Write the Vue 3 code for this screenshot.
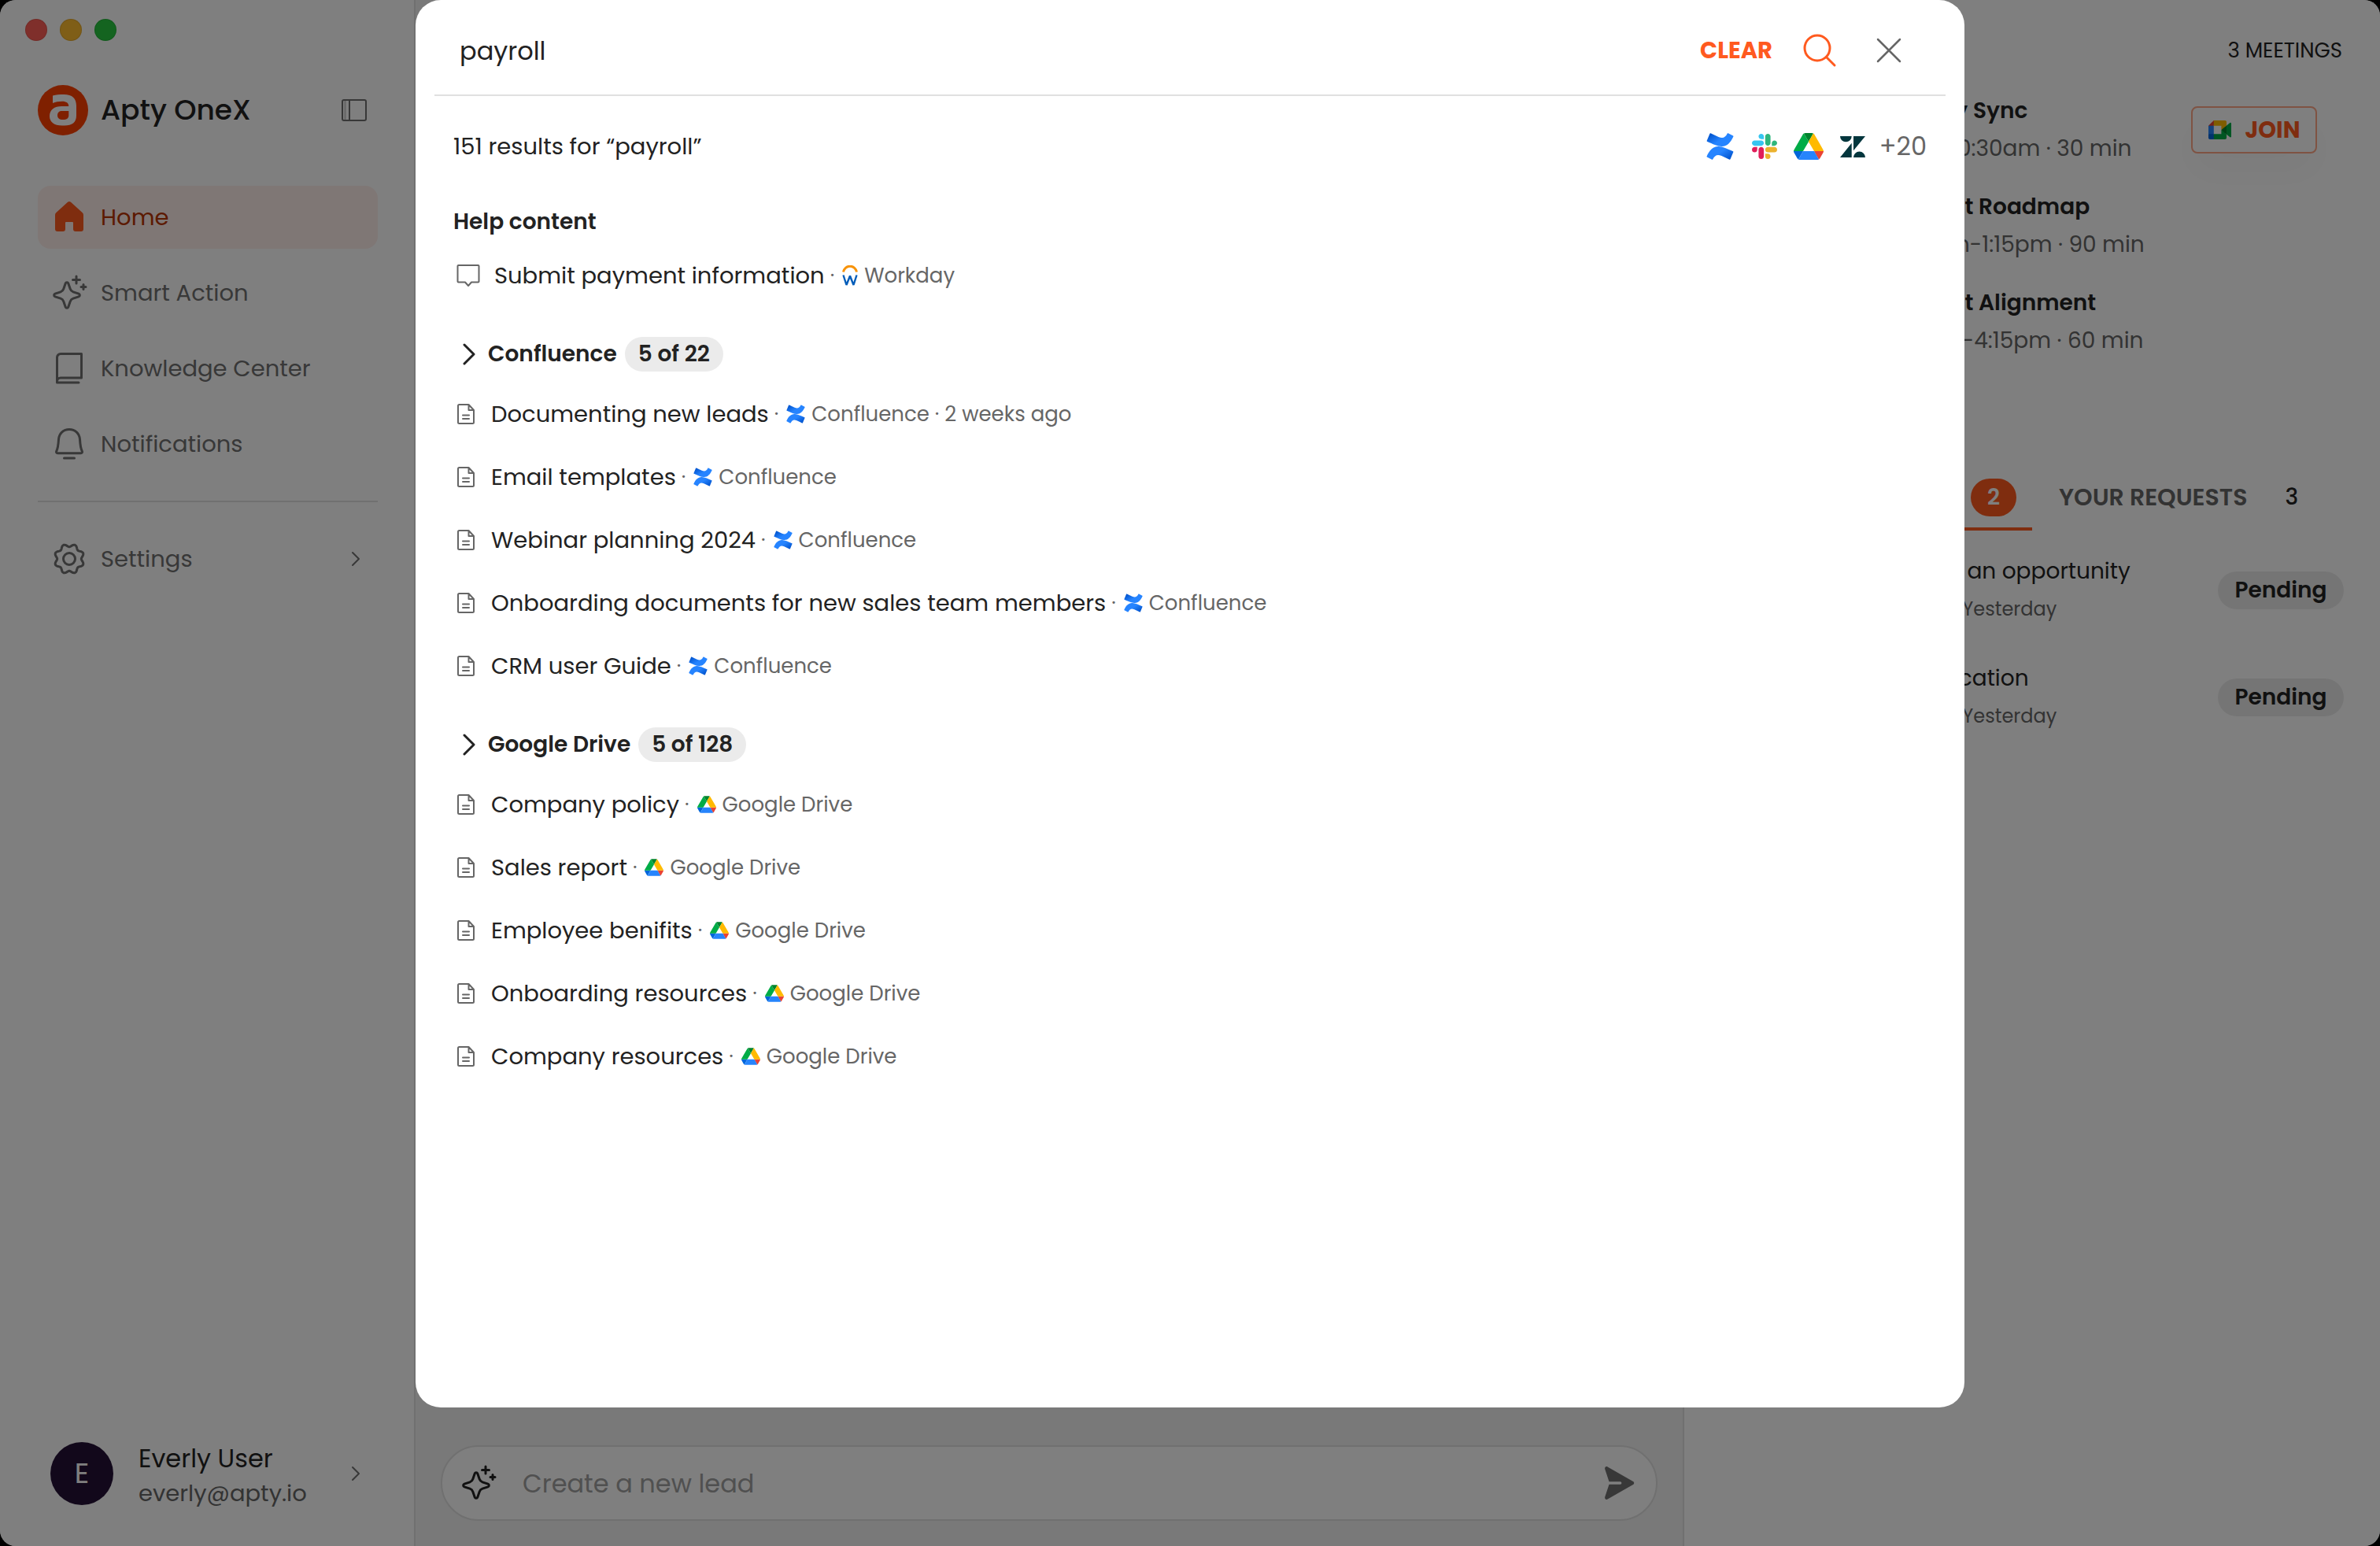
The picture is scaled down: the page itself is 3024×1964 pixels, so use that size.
<script setup>
import { ref } from 'vue'

const query = ref('payroll')
const draft = ref('')

const nav = [
  { label: 'Home', icon: 'home', active: true },
  { label: 'Smart Action', icon: 'sparkle' },
  { label: 'Knowledge Center', icon: 'book' },
  { label: 'Notifications', icon: 'bell' },
]

const groups = [
  {
    name: 'Confluence',
    icon: 'confluence',
    count: '5 of 22',
    items: [
      { title: 'Documenting new leads', when: '2 weeks ago' },
      { title: 'Email templates' },
      { title: 'Webinar planning 2024' },
      { title: 'Onboarding documents for new sales team members' },
      { title: 'CRM user Guide' },
    ],
  },
  {
    name: 'Google Drive',
    icon: 'drive',
    count: '5 of 128',
    items: [
      { title: 'Company policy' },
      { title: 'Sales report' },
      { title: 'Employee benifits' },
      { title: 'Onboarding resources' },
      { title: 'Company resources' },
    ],
  },
]

const meetings = [
  { title: 'Weekly Sync', time: '10:30am · 30 min', next: true },
  { title: 'Product Roadmap', time: '11:45am-1:15pm · 90 min' },
  { title: 'Product Alignment', time: '3:15pm-4:15pm · 60 min' },
]

const requests = [
  { title: 'Create an opportunity', meta: 'Oracle · Yesterday' },
  { title: 'Specification', meta: 'Oracle · Yesterday' },
]

// Eight-toothed gear outline, traced around the centre of a 48px box
const gearPath = Array.from({ length: 96 }, (_, i) => {
  const a = (i / 96) * Math.PI * 2
  const r = 17.2 - 1.9 * Math.cos(8 * a)
  return `${i ? 'L' : 'M'}${(24 + r * Math.cos(a)).toFixed(2)} ${(24 + r * Math.sin(a)).toFixed(2)}`
}).join('') + 'Z'
</script>

<template>
  <svg class="sprite" aria-hidden="true">
    <linearGradient id="cf-a" x1="1" y1="0.8" x2="0.3" y2="0.3">
      <stop offset="0" stop-color="#0052cc" />
      <stop offset="0.7" stop-color="#2684ff" />
    </linearGradient>
    <symbol id="home" viewBox="0 0 48 48">
      <path fill="currentColor" d="M22 4.800a3 3 0 0 1 4 0L40.800 18.300A4 4 0 0 1 42 21.200V39a3 3 0 0 1-3 3h-7a3 3 0 0 1-3-3v-8a1 1 0 0 0-1-1h-8a1 1 0 0 0-1 1v8a3 3 0 0 1-3 3H9a3 3 0 0 1-3-3V21.200a4 4 0 0 1 1.200-2.900z" />
    </symbol>
    <symbol id="sparkle" viewBox="0 0 48 48">
      <g fill="none" stroke="currentColor" stroke-width="3" stroke-linecap="round" stroke-linejoin="round">
        <path d="M19.200 12c.6-1.800 3-1.800 3.600 0l2.400 7c.7 2 1.800 3.100 3.800 3.800l7 2.400c1.800.6 1.800 3 0 3.600l-7 2.400c-2 .7-3.100 1.800-3.800 3.800l-2.400 7c-.6 1.800-3 1.800-3.600 0l-2.400-7c-.7-2-1.800-3.100-3.800-3.800l-7-2.400c-1.800-.6-1.800-3 0-3.600l7-2.400c2-.7 3.100-1.800 3.800-3.800z" />
        <path d="M33 3v9M28.500 7.500h9M42 13.500v6M39 16.500h6" />
      </g>
    </symbol>
    <symbol id="book" viewBox="0 0 48 48">
      <path fill="none" stroke="currentColor" stroke-width="3" stroke-linecap="round" stroke-linejoin="round" d="M8.500 42V10a4.500 4.500 0 0 1 4.500-4.500h26.500V36H13a4.500 4.500 0 0 0-4.500 4.500M8.500 42H36" />
    </symbol>
    <symbol id="bell" viewBox="0 0 48 48">
      <path fill="none" stroke="currentColor" stroke-width="3" stroke-linecap="round" stroke-linejoin="round" d="M24 5.500c-7.700 0-13 5.400-13.500 12.700-.4 7-.8 11-2.700 14.800-.8 1.700 0 2.700 1.500 2.700h29.400c1.500 0 2.300-1 1.500-2.700-1.900-3.800-2.300-7.800-2.700-14.800C37 10.900 31.700 5.500 24 5.500zM17.500 42h13" />
    </symbol>
    <symbol id="chevron" viewBox="0 0 12 20">
      <path fill="none" stroke="currentColor" stroke-width="2" stroke-linecap="round" stroke-linejoin="round" d="M2 2l8 8-8 8" />
    </symbol>
    <symbol id="doc" viewBox="0 0 24 28">
      <path fill="none" stroke="currentColor" stroke-width="2" stroke-linejoin="round" stroke-linecap="round" d="M3.500 2h12l6.500 7v15.500a1.500 1.500 0 0 1-1.500 1.500h-17A1.500 1.500 0 0 1 2 24.500v-21A1.500 1.500 0 0 1 3.500 2M15.500 2v7H22M8 15.500h8M8 20h8" />
    </symbol>
    <symbol id="confluence" viewBox="0 0 35 34">
      <path id="cf-half" fill="url(#cf-a)" d="M.6 29.400C4 22 8.500 16.800 15.500 17c5.500.2 11 3 18.500 6.300.4.200.5.600.3 1l-3.800 9c-.2.400-.6.600-1 .4L19.500 29c-5.500-2.400-8.700-.8-11.300 4.400-.2.400-.6.500-1 .3L.9 30.400c-.4-.2-.5-.6-.3-1z" />
      <use href="#cf-half" transform="rotate(180 17.500 17)" />
    </symbol>
    <symbol id="slack" viewBox="0 0 122.800 122.800">
      <path fill="#e01e5a" d="M25.800 77.600c0 7.100-5.800 12.900-12.900 12.900S0 84.700 0 77.600s5.800-12.900 12.900-12.900h12.900v12.900zm6.500 0c0-7.100 5.800-12.900 12.900-12.900s12.900 5.800 12.900 12.900v32.300c0 7.100-5.800 12.900-12.900 12.900s-12.900-5.800-12.900-12.900V77.600z" />
      <path fill="#36c5f0" d="M45.200 25.800c-7.100 0-12.900-5.800-12.900-12.900S38.100 0 45.200 0s12.900 5.800 12.900 12.900v12.900H45.200zm0 6.500c7.100 0 12.900 5.800 12.900 12.900s-5.800 12.900-12.900 12.900H12.900C5.800 58.100 0 52.300 0 45.200s5.800-12.900 12.900-12.900h32.300z" />
      <path fill="#2eb67d" d="M97 45.200c0-7.100 5.800-12.900 12.900-12.900s12.900 5.800 12.900 12.900-5.800 12.900-12.900 12.900H97V45.200zm-6.500 0c0 7.100-5.800 12.900-12.900 12.900s-12.900-5.800-12.900-12.900V12.900C64.700 5.800 70.500 0 77.600 0s12.900 5.800 12.900 12.900v32.300z" />
      <path fill="#ecb22e" d="M77.600 97c7.100 0 12.900 5.800 12.900 12.900s-5.800 12.900-12.900 12.900-12.900-5.800-12.900-12.900V97h12.900zm0-6.500c-7.100 0-12.900-5.800-12.900-12.900s5.800-12.900 12.900-12.900h32.300c7.100 0 12.900 5.800 12.900 12.900s-5.800 12.900-12.900 12.900H77.600z" />
    </symbol>
    <symbol id="drive" viewBox="0 0 87.300 78">
      <path fill="#0066da" d="m6.600 66.850 3.850 6.650c.8 1.400 1.950 2.500 3.300 3.300l13.750-23.800h-27.500c0 1.550.4 3.100 1.200 4.500z" />
      <path fill="#00ac47" d="m43.650 25-13.750-23.800c-1.350.8-2.500 1.900-3.300 3.300l-25.400 44a9.060 9.060 0 0 0-1.200 4.500h27.500z" />
      <path fill="#ea4335" d="m73.550 76.800c1.350-.8 2.500-1.900 3.300-3.300l1.600-2.750 7.650-13.250c.8-1.400 1.200-2.950 1.200-4.500h-27.502l5.852 11.500z" />
      <path fill="#00832d" d="m43.650 25 13.750-23.800c-1.350-.8-2.900-1.200-4.500-1.200h-18.500c-1.600 0-3.150.45-4.500 1.200z" />
      <path fill="#2684fc" d="m59.800 53h-32.300l-13.750 23.800c1.350.8 2.900 1.200 4.500 1.200h50.800c1.600 0 3.150-.45 4.500-1.200z" />
      <path fill="#ffba00" d="m73.400 26.500-12.700-22c-.8-1.400-1.950-2.500-3.300-3.300l-13.750 23.800 16.150 28h27.450c0-1.550-.4-3.100-1.200-4.500z" />
    </symbol>
  </svg>

  <div class="window">
    <aside class="sidebar">
      <div class="lights"><i class="red"></i><i class="yellow"></i><i class="green"></i></div>
      <div class="brand">
        <svg class="logo" viewBox="0 0 64 64" aria-hidden="true">
          <circle cx="32" cy="32" r="32" fill="#ff4000" />
          <path fill="#fff" fill-rule="evenodd" d="M19 13.500C23 12.300 28 12 33 12c11 0 16 5 16 14.500V39c0 8.500-5.500 12.500-15 12.500h-3c-10.500 0-16-4.500-16-12 0-8 6-12.500 15.500-12.500H39.300c0-4.200-3-6.300-8.300-6.300-4.500 0-8.500.8-12 2.300zM39.300 33H31c-4 0-6 2-6 5.500s2.200 5.500 7 5.500c5 0 7.300-1.800 7.300-5.500z" />
        </svg>
        <span class="brand-name">Apty OneX</span>
        <button class="icon-btn toggle" type="button" aria-label="Toggle sidebar">
          <svg viewBox="0 0 32 28" fill="none" stroke="currentColor" stroke-width="2">
            <rect x="1" y="1" width="30" height="26" rx="2" /><path d="M10 1v26" /><path d="M4.500 2v24" opacity="0.400" />
          </svg>
        </button>
      </div>
      <nav class="nav">
        <a v-for="n in nav" :key="n.label" href="#" class="nav-item" :class="{ active: n.active }">
          <svg class="nav-icon"><use :href="'#' + n.icon" /></svg>
          <span>{{ n.label }}</span>
        </a>
        <hr class="rule" />
        <a href="#" class="nav-item">
          <svg class="nav-icon" viewBox="0 0 48 48" fill="none" stroke="currentColor" stroke-width="3" stroke-linejoin="round">
            <path :d="gearPath" /><circle cx="24" cy="24" r="7.500" />
          </svg>
          <span>Settings</span>
          <svg class="chev"><use href="#chevron" /></svg>
        </a>
      </nav>
      <a href="#" class="user">
        <span class="avatar">E</span>
        <span class="user-text"><span class="user-name">Everly User</span><span class="user-mail">everly@apty.io</span></span>
        <svg class="chev"><use href="#chevron" /></svg>
      </a>
    </aside>

    <main class="main">
      <form class="composer" @submit.prevent>
        <svg class="nav-icon"><use href="#sparkle" /></svg>
        <input v-model="draft" type="text" placeholder="Create a new lead" aria-label="Message" />
        <button class="icon-btn send" type="submit" aria-label="Send">
          <svg viewBox="0 0 48 48" fill="currentColor"><path d="M5.200 6.300C4.600 4 6.500 2.300 8.600 3.400L41 21.900a2.400 2.400 0 0 1 0 4.200L8.600 44.600c-2.100 1.100-4-.6-3.400-2.900L10.500 25.800H24.600a1.800 1.800 0 0 0 0-3.600H10.500z" /></svg>
        </button>
      </form>
    </main>

    <section class="side">
      <p class="count">3 MEETINGS</p>
      <ul class="meetings">
        <li v-for="m in meetings" :key="m.title" class="entry" :class="{ next: m.next }">
          <div>
            <p class="meeting-title">{{ m.title }}</p>
            <p class="meeting-time">{{ m.time }}</p>
          </div>
          <button v-if="m.next" class="join" type="button">
            <svg viewBox="0 0 87.500 72" aria-hidden="true">
              <path fill="#00832d" d="M49.500 36l8.530 9.750 11.470 7.330 2-17.020-2-16.640-11.690 6.440z" />
              <path fill="#0066da" d="M0 51.500V66c0 3.315 2.685 6 6 6h14.500l3-10.960-3-9.540-9.950-3z" />
              <path fill="#e94235" d="M20.500 0L0 20.500l10.550 3 9.950-3 2.950-9.410z" />
              <path fill="#2684fc" d="M20.500 20.500H0v31h20.500z" />
              <path fill="#00ac47" d="M82.600 8.680L69.500 19.420v33.660l13.160 10.790c1.970 1.540 4.850.135 4.850-2.370V11c0-2.535-2.945-3.925-4.910-2.320zM49.500 36v15.500h-29V72h43c3.315 0 6-2.685 6-6V53.080z" />
              <path fill="#ffba00" d="M63.500 0h-43v20.500h29V36l20-16.570V6c0-3.315-2.685-6-6-6z" />
            </svg>
            JOIN
          </button>
        </li>
      </ul>
      <div class="tabs" role="tablist">
        <button class="tab current" type="button" role="tab" aria-selected="true"><span class="badge">2</span></button>
        <button class="tab" type="button" role="tab" aria-selected="false">YOUR REQUESTS <span class="tab-num">3</span></button>
      </div>
      <ul class="requests">
        <li v-for="r in requests" :key="r.title" class="entry">
          <div>
            <p>{{ r.title }}</p>
            <p class="request-meta">{{ r.meta }}</p>
          </div>
          <span class="status">Pending</span>
        </li>
      </ul>
    </section>

    <div class="overlay">
      <div class="modal" role="dialog" aria-label="Search">
        <form class="search" @submit.prevent>
          <input v-model="query" type="text" aria-label="Search" />
          <button class="clear" type="button">CLEAR</button>
          <button class="icon-btn find" type="submit" aria-label="Search">
            <svg viewBox="0 0 48 48" fill="none" stroke="currentColor" stroke-width="3" stroke-linecap="round"><circle cx="21" cy="21" r="16" /><path d="M32.500 32.500L43 43" /></svg>
          </button>
          <button class="icon-btn close" type="button" aria-label="Close">
            <svg viewBox="0 0 48 48" fill="none" stroke="currentColor" stroke-width="2.500" stroke-linecap="round"><path d="M10 10l28 28M38 10L10 38" /></svg>
          </button>
        </form>
        <div class="results">
          <div class="summary">
            <p>151 results for “payroll”</p>
            <div class="sources">
              <svg class="src"><use href="#confluence" /></svg>
              <svg class="src slack"><use href="#slack" /></svg>
              <svg class="src wide"><use href="#drive" /></svg>
              <svg class="src zen" viewBox="0 0 32 27" fill="#03363d"><path d="M0 0h14.700a7.350 7.350 0 0 1-14.700 0zM14.700 8.700V27H0zM17 0h15L17 18.300zM17 27a7.500 7.500 0 0 1 15 0z" /></svg>
              <span>+20</span>
            </div>
          </div>

          <section class="group help">
            <h2>Help content</h2>
            <a href="#" class="row">
              <svg class="chat" viewBox="0 0 30 30" fill="none" stroke="currentColor" stroke-width="2" stroke-linejoin="round"><path d="M2.500 2h25a1 1 0 0 1 1 1v19.500a1 1 0 0 1-1 1H19l-4 4.500-4-4.500H2.500a1 1 0 0 1-1-1V3a1 1 0 0 1 1-1z" /></svg>
              <span class="title">Submit payment information</span>
              <span class="meta">·</span>
              <svg class="workday" viewBox="0 0 20 26" fill="none"><path stroke="#f7930a" stroke-width="3" d="M1.500 8.500a8.600 8.600 0 0 1 17 0" /><path stroke="#005cb9" stroke-width="2.400" stroke-linejoin="bevel" d="M1.500 12.500l4 12.500L10 13.500 14.500 25l4-12.500" /></svg>
              <span class="meta">Workday</span>
            </a>
          </section>

          <section v-for="g in groups" :key="g.name" class="group">
            <button class="group-head" type="button">
              <svg viewBox="0 0 16 28" fill="none" stroke="currentColor" stroke-width="3" stroke-linecap="round" stroke-linejoin="round"><path d="M2 2l12 12L2 26" /></svg>
              <span>{{ g.name }}</span>
              <span class="pill">{{ g.count }}</span>
            </button>
            <ul class="rows">
              <li v-for="it in g.items" :key="it.title">
                <a href="#" class="row">
                  <svg class="doc"><use href="#doc" /></svg>
                  <span class="title">{{ it.title }}</span>
                  <span class="meta">·</span>
                  <svg class="app"><use :href="'#' + g.icon" /></svg>
                  <span class="meta">{{ g.name }}<template v-if="it.when"> · {{ it.when }}</template></span>
                </a>
              </li>
            </ul>
          </section>
        </div>
      </div>
    </div>
  </div>
</template>

<style>
body { margin: 0; background: #000; }
</style>

<style scoped>
.sprite { position: absolute; width: 0; height: 0; }
.window {
  position: relative; display: grid; grid-template-columns: 528px minmax(0, 1fr) 884px;
  min-height: 100vh; border-radius: 20px; overflow: hidden; background: #fff; color: #222;
  font-family: Poppins, Inter, sans-serif; font-size: 28px; line-height: 48px;
}
p, h2, ul { margin: 0; padding: 0; list-style: none; }
a { color: inherit; text-decoration: none; }
button, input { font: inherit; color: inherit; border: 0; background: none; padding: 0; margin: 0; outline: none; }
svg { display: block; flex: none; }
.icon-btn { flex: none; width: 48px; height: 48px; }
.icon-btn svg { width: 100%; height: 100%; }

.sidebar { box-sizing: border-box; display: flex; flex-direction: column; padding: 24px 46px 52px 48px; border-right: 2px solid #e0e0e0; }
.lights { display: flex; gap: 16px; margin-left: -16px; }
.lights i { width: 26px; height: 26px; border: 1px solid rgba(0, 0, 0, 0.1); border-radius: 50%; }
.red { background: #ff5f57; }
.yellow { background: #febc2e; }
.green { background: #28c840; }
.brand { display: flex; align-items: center; height: 64px; margin-top: 56px; }
.logo { width: 64px; height: 64px; }
.brand-name { margin-left: 16px; font-size: 36px; font-weight: 500; }
.toggle { width: 32px; height: 28px; margin-left: auto; margin-right: 14px; color: #707070; }
.nav { margin-top: 64px; display: flex; flex-direction: column; gap: 16px; font-size: 29px; }
.nav-item { display: flex; align-items: center; gap: 16px; height: 80px; padding: 0 22px 0 16px; border-radius: 16px; color: #707070; }
.nav-item.active { background: #ffefeb; color: #b83400; }
.nav-item.active .nav-icon { color: #ff5a1f; }
.nav-icon { width: 48px; height: 48px; }
.chev { width: 12px; height: 20px; margin-left: auto; color: #707070; }
.rule { width: 100%; height: 2px; margin: 16px 0; border: 0; background: #e0e0e0; }
.user { display: flex; align-items: center; margin-top: auto; padding: 0 22px 0 16px; height: 80px; }
.avatar { display: flex; align-items: center; justify-content: center; width: 80px; height: 80px; border-radius: 50%; background: #241036; color: #fff; font-size: 36px; }
.user-text { display: flex; flex-direction: column; padding-top: 6px; margin-left: 32px; line-height: 44px; }
.user-name { font-size: 32px; }
.user-mail { font-size: 29px; color: #666; }

.main { box-sizing: border-box; display: flex; flex-direction: column; justify-content: flex-end; padding: 32px; border-right: 2px solid #e0e0e0; background: #f2f2f2; }
.composer { box-sizing: border-box; display: flex; align-items: center; height: 96px; padding: 0 22px; border: 2px solid #e0e0e0; border-radius: 48px; background: #fff; }
.composer input { flex: 1; min-width: 0; margin-left: 32px; padding-top: 2px; font-size: 32px; }
.composer input::placeholder { color: #a0a0a0; opacity: 1; }
.send { color: #707070; }

.side { padding: 40px 46px 0 40px; }
.count { padding-right: 2px; text-align: right; font-size: 26px; }
.meetings { display: flex; flex-direction: column; gap: 26px; margin-top: 29px; }
.entry { display: flex; align-items: center; justify-content: space-between; padding-left: 216px; white-space: nowrap; }
.meeting-title { font-weight: 600; }
.meeting-time { color: #666; }
.next .meeting-time { padding-left: 82px; }
.join { display: flex; align-items: center; justify-content: center; gap: 18px; width: 160px; height: 60px; margin-right: 34px; border: 2px solid #ffa686; border-radius: 8px; background: #fff; box-shadow: 0 24px 48px rgba(0, 0, 0, 0.03); color: #ff5a1f; font-size: 29px; font-weight: 700; }
.join svg { width: 29px; height: 24px; }
.tabs { display: flex; gap: 34px; margin-top: 151px; }
.tab { display: flex; align-items: flex-start; height: 66px; box-sizing: border-box; font-size: 30px; font-weight: 600; color: #666; }
.tab.current { justify-content: flex-end; width: 402px; padding-right: 20px; border-bottom: 4px solid #ff5a1f; }
.badge { width: 58px; border-radius: 24px; background: #ff5a1f; color: #fff; font-size: 28px; text-align: center; }
.tab-num { margin-left: 48px; color: #222; font-size: 28px; font-weight: 500; }
.requests { display: flex; flex-direction: column; gap: 40px; margin-top: 28px; }
.request-meta { font-size: 24px; color: #666; }
.status { width: 160px; border-radius: 24px; background: #ebebeb; text-align: center; font-weight: 600; }

.overlay { position: absolute; inset: 0; display: flex; padding: 0 528px 176px; background: rgba(0, 0, 0, 0.5); }
.modal { flex: 1; min-width: 0; padding: 0 24px; border-radius: 32px; background: #fff; }
.search { display: flex; align-items: center; height: 112px; padding: 8px 48px 0 32px; border-bottom: 2px solid #e0e0e0; }
.search input { flex: 1; min-width: 0; padding-top: 2px; font-size: 32px; }
.clear { color: #ff5a1f; font-size: 29px; font-weight: 700; }
.find { margin-left: 36px; color: #ff5a1f; }
.close { margin-left: 40px; color: #666; }
.results { padding: 40px 24px 0; }
.summary { display: flex; align-items: center; justify-content: space-between; font-size: 29px; }
.sources { display: flex; align-items: center; color: #666; font-size: 32px; }
.src { width: 35px; height: 34px; }
.slack { width: 32px; height: 32px; margin-left: 23px; }
.wide { width: 38px; margin-left: 21px; }
.zen { width: 32px; height: 27px; margin: 0 18px 0 21px; }
.group { margin-top: 54px; }
.help { margin-top: 48px; }
h2 { font-size: 28px; font-weight: 600; margin-bottom: 20px; }
.row { display: flex; align-items: center; padding-left: 4px; font-size: 29px; }
.chat { width: 30px; height: 30px; color: #666; }
.doc { width: 24px; height: 28px; margin-right: 2px; color: #666; }
.title { margin: 0 7px 0 18px; }
.meta { font-size: 26px; color: #666; }
.app, .workday { width: 24px; height: 24px; margin: 0 8px 0 10px; }
.workday { width: 20px; height: 26px; }
.group-head { display: flex; align-items: center; height: 44px; padding-left: 12px; font-weight: 600; line-height: 44px; }
.group-head svg { width: 16px; height: 28px; margin-right: 16px; }
.pill { margin-left: 10px; padding: 0 17px; border-radius: 22px; background: #ebebeb; }
.rows { display: flex; flex-direction: column; gap: 32px; margin-top: 30px; }
</style>
